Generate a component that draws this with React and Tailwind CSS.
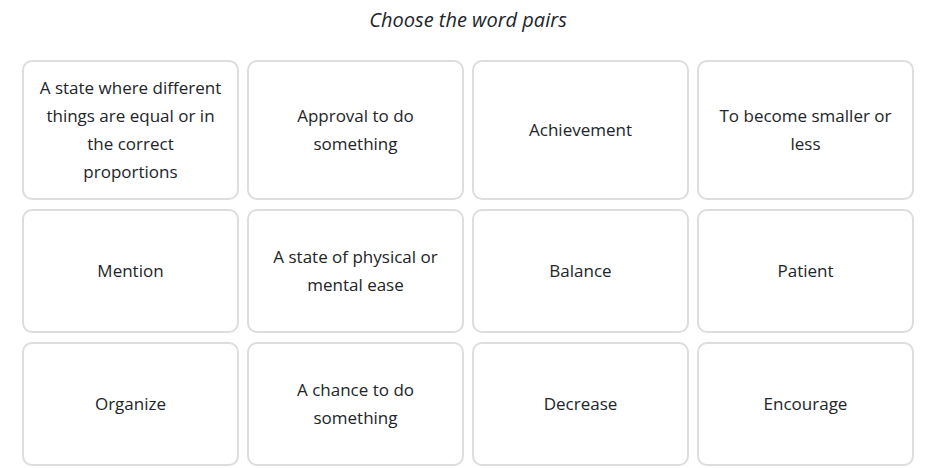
const cards = [
  'A state where different things are equal or in the correct proportions',
  'Approval to do something',
  'Achievement',
  'To become smaller or less',
  'Mention',
  'A state of physical or mental ease',
  'Balance',
  'Patient',
  'Organize',
  'A chance to do something',
  'Decrease',
  'Encourage',
];

export default function App() {
  return (
    <div className="min-h-[468px] bg-white text-[#212529] font-['Open_Sans',sans-serif]">
      <div className="ml-[22px] w-[892px]">
        {/* Heading */}
        <div className="pt-[6px] h-[60px] text-center">
          <h2 className="text-[20px] leading-[28px] italic">Choose the word pairs</h2>
        </div>

        {/* Word grid */}
        <div className="grid grid-cols-4 gap-x-2 gap-y-[9px]">
          {cards.map((text, idx) => (
            <div
              key={idx}
              className="min-h-[124px] flex items-center justify-center text-center px-[15px] py-3 border-2 border-[#dddddd] rounded-[10px] text-[17px] leading-[28px] cursor-pointer"
            >
              {text}
            </div>
          ))}
        </div>
      </div>
    </div>
  );
}
